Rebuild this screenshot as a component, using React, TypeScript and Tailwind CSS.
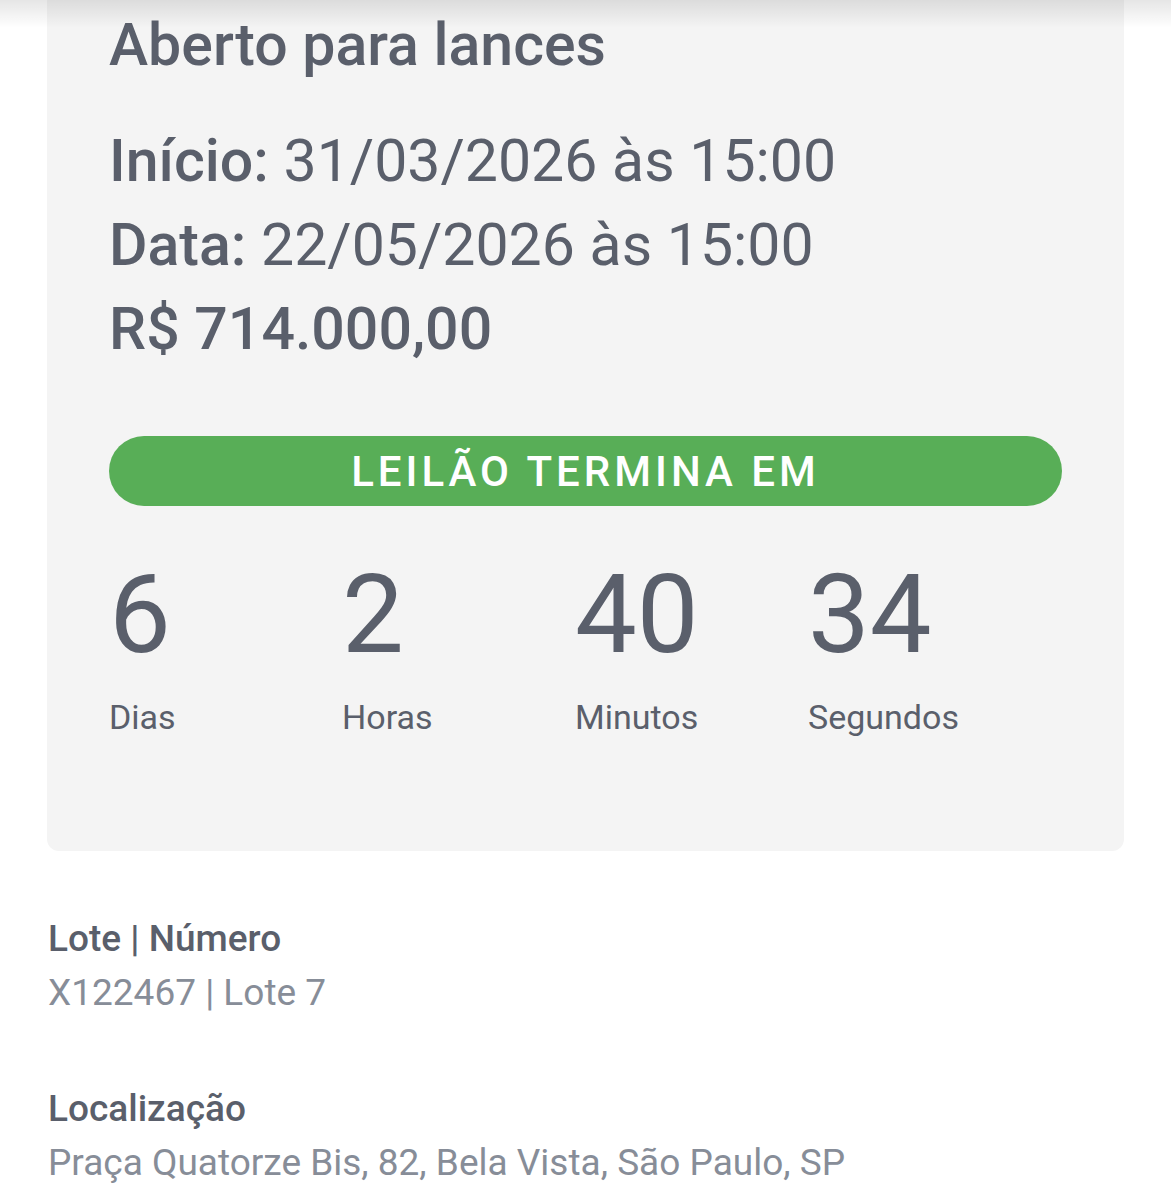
const countdown = [
  { value: "6", label: "Dias" },
  { value: "2", label: "Horas" },
  { value: "40", label: "Minutos" },
  { value: "34", label: "Segundos" },
];

export default function App() {
  return (
    <div className="relative min-h-[1200px] overflow-hidden bg-white font-['Roboto',sans-serif] text-[#5a5f6b]">
      {/* shadow from the header above */}
      <div className="pointer-events-none absolute inset-x-0 top-0 z-10 h-7 bg-gradient-to-b from-black/10 to-transparent" />

      <div className="px-[47px]">
        <div className="-mt-[24px] rounded-b-xl bg-[#f4f4f4] px-[62px] pb-[114px] pt-[27px]">
          <h2 className="text-[59px] font-medium leading-[84px]">Aberto para lances</h2>

          <div className="mt-[32px] text-[59px] leading-[84px]">
            <p>
              <span className="font-medium">Início:</span> 31/03/2026 às 15:00
            </p>
            <p>
              <span className="font-medium">Data:</span> 22/05/2026 às 15:00
            </p>
            <p className="font-medium">R$ 714.000,00</p>
          </div>

          <div className="mt-[65px] flex h-[70px] items-center justify-center rounded-full bg-[#58ae57] text-[42px] font-medium tracking-[4px] text-white">
            LEILÃO TERMINA EM
          </div>

          <div className="mt-[49px] grid w-[932px] grid-cols-4">
            {countdown.map((c) => (
              <div key={c.label} className="flex flex-col">
                <span className="text-[110px] leading-[120px]">{c.value}</span>
                <span className="mt-[22px] text-[34px] leading-[40px]">{c.label}</span>
              </div>
            ))}
          </div>
        </div>

        <div className="mt-[61px] flex flex-col gap-[62px] pl-px">
          <div>
            <p className="text-[37px] font-medium leading-[54px]">Lote | Número</p>
            <p className="text-[37px] leading-[54px] text-[#878d98]">X122467 | Lote 7</p>
          </div>
          <div>
            <p className="text-[37px] font-medium leading-[54px]">Localização</p>
            <p className="text-[37px] leading-[54px] text-[#878d98]">
              Praça Quatorze Bis, 82, Bela Vista, São Paulo, SP
            </p>
          </div>
        </div>
      </div>
    </div>
  );
}
